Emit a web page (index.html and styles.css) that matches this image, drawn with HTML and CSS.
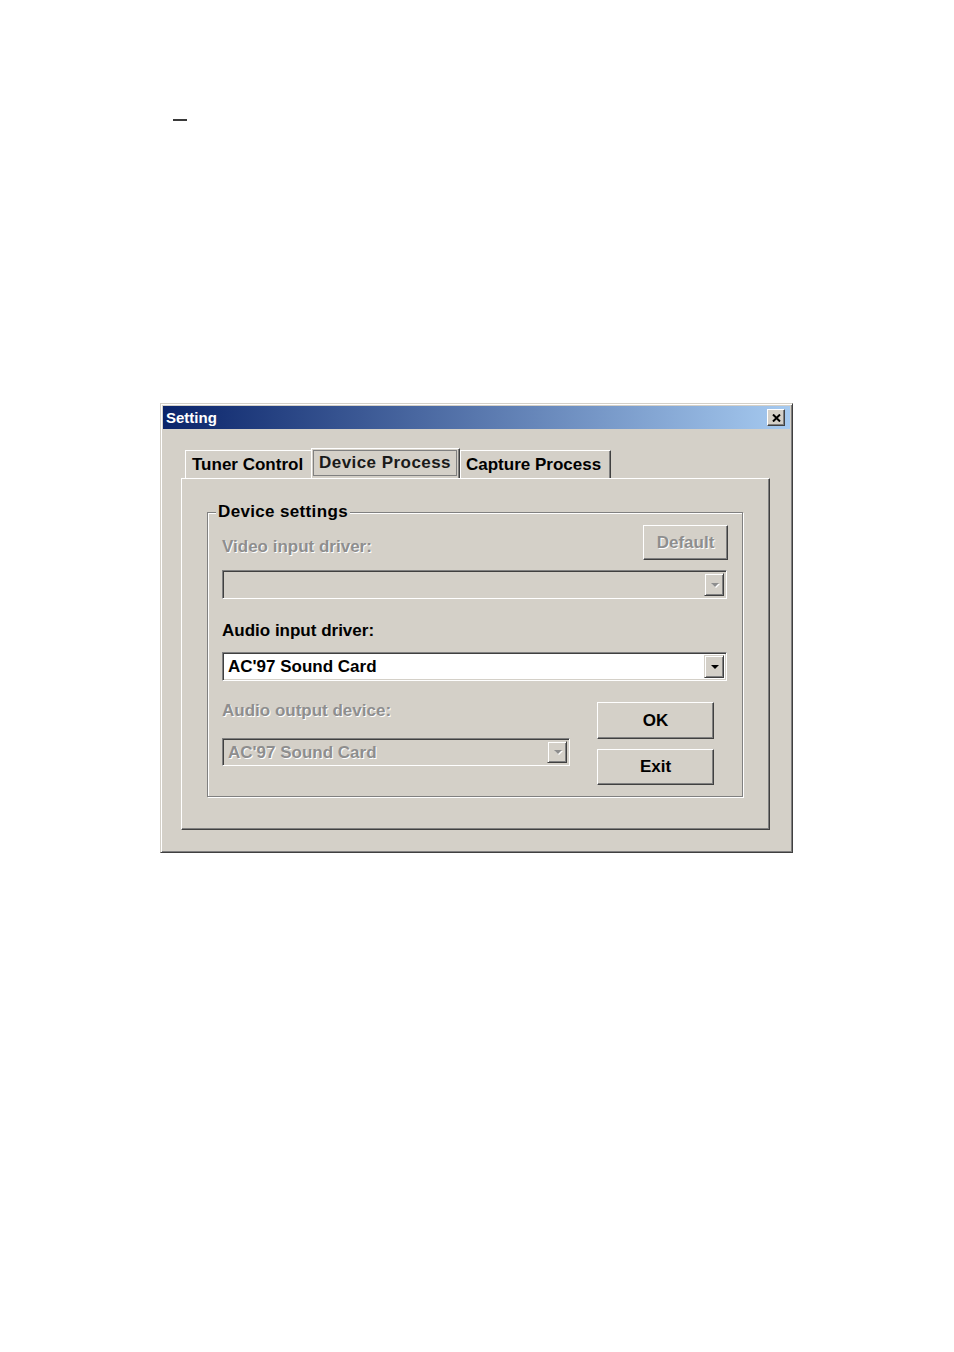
FILE: index.html
```html
<!DOCTYPE html>
<html>
<head>
<meta charset="utf-8">
<title>Setting</title>
<link rel="stylesheet" href="styles.css">
</head>
<body>
<div class="dash"></div>
<div class="window">
  <div class="titlebar">
    <span class="title">Setting</span>
    <span class="close">
      <svg width="9" height="8" viewBox="0 0 9 8"><path d="M1 0.5 L8 7.5 M8 0.5 L1 7.5" stroke="#000" stroke-width="2"/></svg>
    </span>
  </div>
  <div class="tabs">
    <div class="tab tab-tuner">Tuner Control</div>
    <div class="tab tab-active"><span class="focus">Device Process</span></div>
    <div class="tab tab-capture">Capture Process</div>
  </div>
  <div class="panel">
    <div class="group">
      <span class="legend">Device settings</span>
      <div class="row1">
        <span class="label disabled label-video">Video input driver:</span>
        <span class="btn btn-default disabled">Default</span>
      </div>
      <div class="combo combo1 is-disabled">
        <span class="combo-text"></span>
        <span class="arrow-btn"><span class="arrow"></span></span>
      </div>
      <div class="label label-audio-in">Audio input driver:</div>
      <div class="combo combo2 is-white">
        <span class="combo-text">AC'97 Sound Card</span>
        <span class="arrow-btn"><span class="arrow"></span></span>
      </div>
      <div class="row5">
        <div class="col-left">
          <div class="label disabled">Audio output device:</div>
          <div class="combo combo3 is-disabled">
            <span class="combo-text disabled">AC'97 Sound Card</span>
            <span class="arrow-btn"><span class="arrow"></span></span>
          </div>
        </div>
        <div class="col-right">
          <span class="btn btn-ok">OK</span>
          <span class="btn btn-exit">Exit</span>
        </div>
      </div>
    </div>
  </div>
</div>
</body>
</html>
```
FILE: styles.css
```css
* { box-sizing: border-box; }
html, body { margin: 0; padding: 0; background: #ffffff; }
body {
  font-family: "Liberation Sans", Arial, sans-serif;
  font-weight: bold;
  font-size: 17px;
  color: #000;
}
.dash {
  margin-left: 173px;
  margin-top: 119px;
  width: 14px;
  height: 2px;
  background: #3a3a3a;
}
.window {
  margin-top: 282px;
  margin-left: 160px;
  width: 633px;
  height: 450px;
  background: #d4d0c8;
  border: 1px solid;
  border-color: #d4d0c8 #404040 #404040 #d4d0c8;
  box-shadow: inset 1px 1px 0 #ffffff, inset -1px -1px 0 #808080;
  padding: 2px;
}
.titlebar {
  height: 23px;
  background: linear-gradient(to right, #0a246a, #a6caf0);
  display: flex;
  align-items: center;
  justify-content: space-between;
  padding: 0 5px 0 3px;
}
.title {
  color: #ffffff;
  font-size: 15px;
  font-weight: bold;
  line-height: 18px;
}
.close {
  width: 18px;
  height: 17px;
  background: #d4d0c8;
  border: 1px solid;
  border-color: #ffffff #404040 #404040 #ffffff;
  box-shadow: inset -1px -1px 0 #808080;
  display: flex;
  align-items: center;
  justify-content: center;
}
.close svg { display: block; }
.tabs {
  margin-top: 19px;
  margin-left: 22px;
  height: 30px;
  display: flex;
  align-items: flex-end;
}
.tab {
  height: 28px;
  line-height: 20px;
  padding-top: 4px;
  border-top: 1px solid #ffffff;
  border-left: 1px solid #ffffff;
  white-space: nowrap;
}
.tab-tuner {
  width: 126px;
  padding-left: 6px;
}
.tab-active {
  width: 149px;
  height: 30px;
  padding: 1px 2px 3px 1px;
  border-right: 1px solid #404040;
  box-shadow: inset -1px 0 0 #808080;
}
.focus {
  display: block;
  height: 26px;
  border: 1px solid #808080;
  padding: 2px 0 0 5px;
  line-height: 20px;
  letter-spacing: 0.45px;
  color: #1a1a1a;
}
.tab-capture {
  width: 151px;
  padding-left: 5px;
  border-right: 1px solid #404040;
  box-shadow: inset -1px 0 0 #808080;
}
.panel {
  margin-left: 18px;
  width: 589px;
  height: 352px;
  border: 1px solid;
  border-color: #ffffff #404040 #404040 #ffffff;
  box-shadow: inset -1px -1px 0 #808080;
  padding: 33px 0 0 25px;
}
.group {
  position: relative;
  width: 536px;
  border: 1px solid #808080;
  box-shadow: inset 1px 1px 0 #ffffff, 1px 1px 0 #ffffff;
  padding: 12px 15px 11px 14px;
}
.legend {
  position: absolute;
  top: -11px;
  left: 8px;
  padding: 0 2px;
  background: #d4d0c8;
  line-height: 20px;
  letter-spacing: 0.35px;
}
.label {
  line-height: 20px;
  white-space: nowrap;
}
.disabled {
  color: #8e8e8e;
  text-shadow: 1px 1px 0 #ffffff;
}
.row1 {
  height: 35px;
  display: flex;
  justify-content: space-between;
  align-items: flex-start;
}
.label-video { margin-top: 12px; }
.btn {
  display: flex;
  align-items: center;
  justify-content: center;
  background: #d4d0c8;
  border: 1px solid;
  border-color: #ffffff #404040 #404040 #ffffff;
  box-shadow: inset -1px -1px 0 #808080;
  line-height: 20px;
}
.btn-default {
  width: 85px;
  height: 35px;
  margin-right: -1px;
}
.combo {
  display: flex;
  border: 1px solid;
  border-color: #808080 #ffffff #ffffff #808080;
  box-shadow: inset 1px 1px 0 #404040, inset -1px -1px 0 #d4d0c8;
  padding: 2px;
}
.is-white { background: #ffffff; }
.is-disabled { background: #d4d0c8; }
.combo-text {
  flex: 1;
  padding-left: 3px;
  line-height: 23px;
  white-space: nowrap;
}
.combo1 { margin-top: 10px; height: 29px; }
.label-audio-in { margin-top: 22px; }
.combo2 { margin-top: 11px; height: 29px; }
.arrow-btn {
  width: 20px;
  background: #d4d0c8;
  border: 1px solid;
  border-color: #d4d0c8 #404040 #404040 #d4d0c8;
  box-shadow: inset 1px 1px 0 #ffffff, inset -1px -1px 0 #808080;
  display: flex;
  align-items: center;
  justify-content: center;
}
.arrow {
  width: 0;
  height: 0;
  border-left: 4px solid transparent;
  border-right: 4px solid transparent;
  border-top: 4px solid #000;
  margin-left: 1px;
}
.is-disabled .arrow {
  border-top-color: #8e8e8e;
  filter: drop-shadow(1px 1px 0 #ffffff);
}
.row5 {
  margin-top: 20px;
  display: grid;
  grid-template-columns: 348px 117px;
  column-gap: 27px;
}
.combo3 { margin-top: 17px; height: 28px; }
.col-right {
  display: flex;
  flex-direction: column;
}
.btn-ok { margin-top: 1px; height: 37px; }
.btn-exit { margin-top: 10px; height: 36px; }
```
